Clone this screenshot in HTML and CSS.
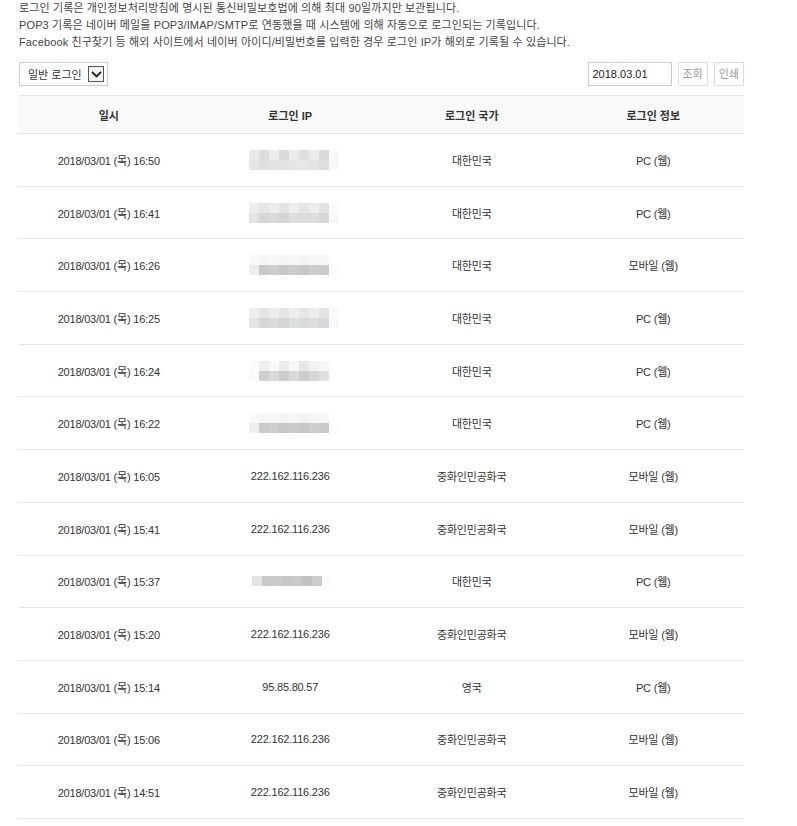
FILE: index.html
```html
<!DOCTYPE html>
<html lang="ko">
<head>
    <meta charset="UTF-8">
    <meta name="viewport" content="width=device-width, initial-scale=1.0">
    <title>로그인 기록</title>
    <link rel="stylesheet" href="styles.css">
</head>
<body>
    <div class="notice">
        <p>로그인 기록은 개인정보처리방침에 명시된 통신비밀보호법에 의해 최대 90일까지만 보관됩니다.</p>
        <p>POP3 기록은 네이버 메일을 POP3/IMAP/SMTP로 연동했을 때 시스템에 의해 자동으로 로그인되는 기록입니다.</p>
        <p>Facebook 친구찾기 등 해외 사이트에서 네이버 아이디/비밀번호를 입력한 경우 로그인 IP가 해외로 기록될 수 있습니다.</p>
    </div>

    <div class="toolbar">
        <div class="select">
            <span>일반 로그인</span>
            <span class="arrow">
                <svg width="11" height="7" viewBox="0 0 11 7"><path d="M1 1 L5.5 5.5 L10 1" fill="none" stroke="#222" stroke-width="1.8"/></svg>
            </span>
        </div>
        <div class="right">
            <div class="date">2018.03.01</div>
            <div class="btn">조회</div>
            <div class="btn">인쇄</div>
        </div>
    </div>

    <table class="log">
        <thead>
            <tr><th>일시</th><th>로그인 IP</th><th>로그인 국가</th><th>로그인 정보</th></tr>
        </thead>
        <tbody>
            <tr><td>2018/03/01 (목) 16:50</td><td><div class="mosaic m1"></div></td><td>대한민국</td><td>PC (웹)</td></tr>
            <tr><td>2018/03/01 (목) 16:41</td><td><div class="mosaic m2"></div></td><td>대한민국</td><td>PC (웹)</td></tr>
            <tr><td>2018/03/01 (목) 16:26</td><td><div class="mosaic m3"></div></td><td>대한민국</td><td>모바일 (웹)</td></tr>
            <tr><td>2018/03/01 (목) 16:25</td><td><div class="mosaic m2"></div></td><td>대한민국</td><td>PC (웹)</td></tr>
            <tr><td>2018/03/01 (목) 16:24</td><td><div class="mosaic m4"></div></td><td>대한민국</td><td>PC (웹)</td></tr>
            <tr><td>2018/03/01 (목) 16:22</td><td><div class="mosaic m3"></div></td><td>대한민국</td><td>PC (웹)</td></tr>
            <tr><td>2018/03/01 (목) 16:05</td><td>222.162.116.236</td><td>중화인민공화국</td><td>모바일 (웹)</td></tr>
            <tr><td>2018/03/01 (목) 15:41</td><td>222.162.116.236</td><td>중화인민공화국</td><td>모바일 (웹)</td></tr>
            <tr><td>2018/03/01 (목) 15:37</td><td><div class="mosaic m5"></div></td><td>대한민국</td><td>PC (웹)</td></tr>
            <tr><td>2018/03/01 (목) 15:20</td><td>222.162.116.236</td><td>중화인민공화국</td><td>모바일 (웹)</td></tr>
            <tr><td>2018/03/01 (목) 15:14</td><td>95.85.80.57</td><td>영국</td><td>PC (웹)</td></tr>
            <tr><td>2018/03/01 (목) 15:06</td><td>222.162.116.236</td><td>중화인민공화국</td><td>모바일 (웹)</td></tr>
            <tr><td>2018/03/01 (목) 14:51</td><td>222.162.116.236</td><td>중화인민공화국</td><td>모바일 (웹)</td></tr>
        </tbody>
    </table>
</body>
</html>
```

FILE: styles.css
```css
body{
    margin: 0;
    background: #fff;
    color: #333;
    font-family: "Liberation Sans", "Noto Sans CJK KR", sans-serif;
    font-size: 11px;
}

.notice{
    padding-left: 19px;
    color: #444;
    letter-spacing: 0.12px;
}
.notice p{
    margin: 0;
    line-height: 17px;
}

.toolbar{
    display: flex;
    justify-content: space-between;
    align-items: center;
    margin: 11px 53px 0 19px;
}

.select{
    display: flex;
    align-items: center;
    justify-content: space-between;
    width: 89px;
    height: 24px;
    box-sizing: border-box;
    border: 1px solid #ccc;
    padding: 0 3px 0 8px;
}
.select .arrow{
    display: flex;
    align-items: center;
    justify-content: center;
    width: 14px;
    height: 14px;
    border: 1px solid #555;
    background: #f4f4f4;
}

.right{
    display: flex;
    gap: 6px;
}
.date{
    width: 84px;
    height: 24px;
    box-sizing: border-box;
    border: 1px solid #ccc;
    padding-left: 4px;
    line-height: 22px;
    color: #222;
}
.btn{
    height: 24px;
    box-sizing: border-box;
    border: 1px solid #ddd;
    padding: 0 4px;
    line-height: 22px;
    color: #999;
}

.log{
    margin: 9px 0 0 18px;
    width: 726px;
    border-collapse: collapse;
    table-layout: fixed;
}
.log th{
    height: 35px;
    background: #f9f9f9;
    border-top: 1px solid #e6e6e6;
    border-bottom: 1px solid #e6e6e6;
    font-weight: bold;
    color: #333;
}
.log td{
    height: 51.7px;
    padding: 0;
    text-align: center;
    letter-spacing: -0.2px;
    border-bottom: 1px solid #e3e3e3;
}

.mosaic{
    width: 90px;
    height: 20px;
    margin-left: 49px;
    background-size: 100% 50%;
    background-repeat: no-repeat;
    background-position: top, bottom;
}
.m1{
    background-image:
        linear-gradient(to right, #e9e9e9 0 10px, #dcdcdc 10px 20px, #ececec 20px 30px, #d9d9d9 30px 40px, #ebebeb 40px 50px, #dedfe2 50px 60px, #ebebeb 60px 70px, #dadada 70px 80px, #f8f8f8 80px 90px),
        linear-gradient(to right, #e5e5e5 0 10px, #dfdfdf 10px 20px, #e3e3e3 20px 30px, #e1e2e1 30px 40px, #e5e5e5 40px 50px, #e6e6e8 50px 60px, #e4e4e4 60px 70px, #dedede 70px 80px, #f9f9f9 80px 90px);
}
.m2{
    background-image:
        linear-gradient(to right, #eeeeee 0 10px, #e6e6e6 10px 20px, #ececec 20px 30px, #e3e3e3 30px 40px, #eeeeee 40px 50px, #e6e6e3 50px 60px, #ededed 60px 70px, #e3e3e5 70px 80px, #fafafa 80px 90px),
        linear-gradient(to right, #e3e3e3 0 10px, #d6d6d6 10px 20px, #dadada 20px 30px, #d5d5d5 30px 40px, #dcdddd 40px 50px, #dadcdc 50px 60px, #dcdcdc 60px 70px, #d6d7da 70px 80px, #f8f8f8 80px 90px);
}
.m3{
    background-image:
        linear-gradient(to right, #f9f9f9 0 10px, #f6f6f6 10px 20px, #f7f7f7 20px 30px, #f5f5f5 30px 40px, #f6f6f6 40px 50px, #f4f4f4 50px 60px, #f6f6f6 60px 70px, #f6f6f6 70px 80px, #fff 80px 90px),
        linear-gradient(to right, #efeeec 0 10px, #c9c9c9 10px 20px, #cecece 20px 30px, #c8c6c6 30px 40px, #cbcbcb 40px 50px, #c6c8c8 50px 60px, #cdcdcd 60px 70px, #c9cbcb 70px 80px, #fcfcfc 80px 90px);
}
.m4{
    background-image:
        linear-gradient(to right, #fbfafa 0 10px, #eeeeee 10px 20px, #f9f9f9 20px 30px, #ececec 30px 40px, #f7f7f7 40px 50px, #e7e7e7 50px 60px, #f3f3f3 60px 70px, #f6f6f6 70px 80px, #fff 80px 90px),
        linear-gradient(to right, #faf9f9 0 10px, #cfcfcf 10px 20px, #dbd9da 20px 30px, #cdcdcd 30px 40px, #d8d9dc 40px 50px, #cdcccd 50px 60px, #d5d7d7 60px 70px, #e1dfe0 70px 80px, #fff 80px 90px);
}
.m5{
    height: 10px;
    width: 78px;
    margin-left: 52px;
    background-size: 100% 100%;
    background-image:
        linear-gradient(to right, #e5e4e2 0 10px, #c9c9c9 10px 20px, #cccbca 20px 30px, #c6c6c6 30px 40px, #c9c9c9 40px 50px, #c1c1c1 50px 60px, #cccccc 60px 70px, #fafafa 70px 78px);
}
```
